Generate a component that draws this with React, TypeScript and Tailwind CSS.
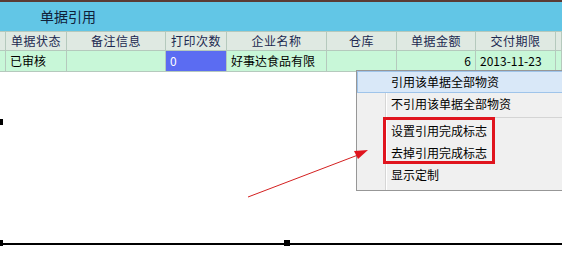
import React from 'react';

const cols = [
  { w: 6, head: '', cell: '' },
  { w: 61, head: '单据状态', cell: '已审核', align: 'left' },
  { w: 99, head: '备注信息', cell: '' },
  { w: 61, head: '打印次数', cell: '0', blue: true },
  { w: 100, head: '企业名称', cell: '好事达食品有限', align: 'left' },
  { w: 70, head: '仓库', cell: '' },
  { w: 79, head: '单据金额', cell: '6', align: 'right' },
  { w: 80, head: '交付期限', cell: '2013-11-23', align: 'left' },
  { w: 6, head: '', cell: '' },
];

const font = { fontFamily: '"Noto Sans CJK SC", "Noto Sans", sans-serif' };

function MenuItem({ children }: { children: React.ReactNode }) {
  return <div className="relative flex h-[22px] items-center pl-[34px]">{children}</div>;
}

export default function App() {
  return (
    <div className="relative flex h-[255px] w-[562px] flex-col overflow-hidden bg-white text-[12px]" style={font}>
      <div className="h-[2px] bg-[#5b3b34]" />
      <div className="flex h-[29px] items-center bg-[#62c6e6] pl-[40px] text-[14px] text-[#10203a]">单据引用</div>

      {/* header */}
      <div className="flex h-[20px] border-y border-[#b5c9bd] bg-[#dfe9e2] text-[#1b2850]">
        {cols.map((c, i) => (
          <div key={i} style={{ width: c.w }} className="flex shrink-0 items-center justify-center border-r border-[#b5c9bd] leading-none tracking-[0.5px]">
            {c.head}
          </div>
        ))}
      </div>

      {/* data row */}
      <div className="flex h-[21px] border-b border-[#b5c9bd] bg-[#c8f7d8] text-black">
        {cols.map((c, i) => (
          <div
            key={i}
            style={{ width: c.w }}
            className={`flex shrink-0 items-center border-r border-[#b5c9bd] leading-none ${
              c.blue ? 'bg-[#5b6cf2] pl-[4px] text-white' : ''
            } ${c.align === 'right' ? 'justify-end pr-[4px]' : c.align === 'left' ? 'pl-[4px]' : ''}`}
          >
            {c.cell}
          </div>
        ))}
      </div>

      {/* empty design surface with bottom rule */}
      <div className="relative mt-auto mb-[10px] h-[2px] bg-black">
        <div className="absolute left-0 top-[-3px] h-[6px] w-[3px] bg-black" />
        <div className="absolute left-[284px] top-[-3px] h-[6px] w-[6px] bg-black" />
      </div>
      <div className="absolute left-0 top-[119px] h-[6px] w-[3px] bg-black" />

      {/* context menu */}
      <div className="absolute left-[356px] top-[70px] w-[220px] border border-[#979797] bg-[#f0f0f0] pb-[4px] text-black">
        <div className="absolute left-[28px] top-0 bottom-0 w-px bg-[#d6d6d6]" />
        <div className="absolute left-[29px] top-0 bottom-0 w-px bg-white" />
        <div className="relative flex h-[22px] items-center border border-[#9fc4ea] bg-[#d9e8f8] pl-[33px]">引用该单据全部物资</div>
        <MenuItem>不引用该单据全部物资</MenuItem>
        <div className="relative my-[2px] ml-[31px] h-px bg-[#d4d4d4]" />
        <div className="relative">
          <div className="absolute left-[26px] top-[-3px] h-[47px] w-[112px] border-[3px] border-[#e0141e]" />
          <MenuItem>设置引用完成标志</MenuItem>
          <MenuItem>去掉引用完成标志</MenuItem>
        </div>
        <MenuItem>显示定制</MenuItem>
      </div>

      {/* annotation arrow */}
      <svg className="pointer-events-none absolute left-0 top-0" width="562" height="255">
        <line x1="248" y1="197" x2="358" y2="155" stroke="#d42020" strokeWidth="1" />
        <polygon points="368,150 354,151 358,159" fill="#e0141e" />
      </svg>
    </div>
  );
}
